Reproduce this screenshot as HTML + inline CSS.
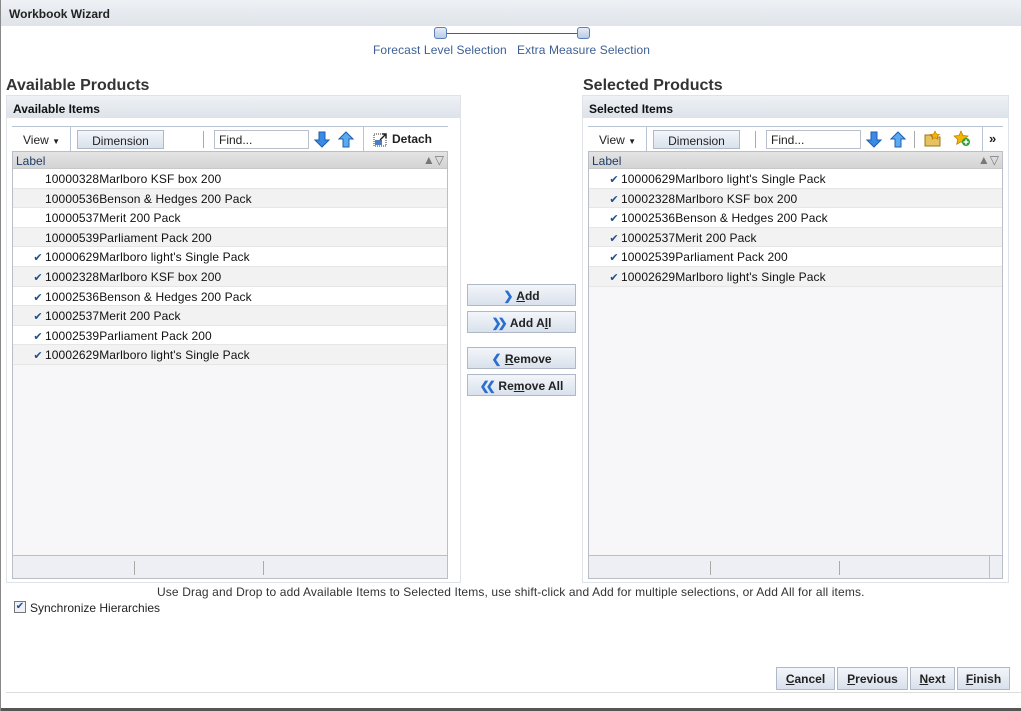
<!DOCTYPE html>
<html><head><style>
*{box-sizing:border-box;margin:0;padding:0}
body{width:1021px;height:711px;position:relative;background:#fff;font-family:"Liberation Sans",Arial,sans-serif;font-size:12px;color:#222;overflow:hidden}
.a{position:absolute}
.titlebar{left:0;top:0;width:1021px;height:26px;background:linear-gradient(#eef1f5,#dfe4ea);border-left:1px solid #999}
.sq{width:13px;height:12px;border:1px solid #5b7fb8;border-radius:3px;background:linear-gradient(#e6edf8,#b9cbe6)}
.tl{color:#3d5f94;font-size:12px;letter-spacing:0.1px}
h2{position:absolute;font-size:16px;font-weight:bold;color:#333}
.panel{border:1px solid #dfe3e8;background:#fff}
.phead{background:linear-gradient(#eef1f5,#dde3ea);height:22px;font-weight:bold;padding:6px 6px 0;font-size:12px;color:#111}
.tb{border-top:1px solid #b9c4d4}
.btn{border:1px solid #aeb8c6;background:linear-gradient(#f3f6fa,#d9e1ec);font-weight:bold;text-align:center;color:#222;font-size:12px}
.find{border:1px solid #b9c0cc;background:#fff;padding:2px 4px;font-size:12px}
.table{border:1px solid #b9bfc9;background:#f7f7fa}
.lh{height:17px;background:linear-gradient(#e4e4e4,#d4d4d4);color:#1f3c66;padding:2px 3px;font-size:12px;border-bottom:1px solid #c8c8c8}
.row{height:19.6px;line-height:20px;border-bottom:1px solid #e6e6e6;background:#fff;font-size:12px;color:#111;white-space:nowrap;letter-spacing:0.1px}
.row.g{background:#f2f2f2}
.ck{color:#1d4f8c;display:inline-block;width:14px;text-align:center;font-size:11px}
.foot{height:23px;background:#eeeff4;border-top:1px solid #b9bfc9}
.vs{position:absolute;top:5px;height:14px;border-left:1px solid #aaa}
.sep{border-left:1px solid #b9c4d4;height:24px}
.sort{float:right;font-size:12px;color:#777;line-height:12px}
u{text-decoration:underline}
</style></head><body>
<div class="a titlebar"><div class="a" style="left:8px;top:7px;font-weight:bold;font-size:12px">Workbook Wizard</div></div>
<div class="a" style="left:446px;top:33px;width:132px;border-top:1px solid #3d5f94"></div>
<div class="a sq" style="left:434px;top:27px"></div>
<div class="a sq" style="left:577px;top:27px"></div>
<div class="a tl" style="left:373px;top:43px">Forecast Level Selection</div>
<div class="a tl" style="left:517px;top:43px">Extra Measure Selection</div>

<h2 style="left:6px;top:77px">Available Products</h2>
<h2 style="left:583px;top:77px">Selected Products</h2>

<div class="a panel" style="left:6px;top:95px;width:455px;height:488px">
 <div class="phead">Available Items</div>
</div>
<div class="a tb" style="left:12px;top:126px;width:436px;height:25px"></div>
<div class="a" style="left:23px;top:133px">View <span style="font-size:8px">▼</span></div>
<div class="a sep" style="left:70px;top:127px"></div>
<div class="a btn" style="left:77px;top:130px;width:87px;height:19px;font-weight:normal;padding-top:3px">Dimension</div>
<div class="a" style="left:203px;top:131px;height:17px;border-left:1px solid #aaa"></div>
<div class="a find" style="left:214px;top:130px;width:95px;height:19px">Find...</div>
<svg class="a" style="left:314px;top:131px" width="16" height="17" viewBox="0 0 16 17"><path d="M5 1h6v8h4l-7 7-7-7h4z" fill="#3b8ae6" stroke="#1b5fb0"/></svg>
<svg class="a" style="left:338px;top:131px" width="16" height="17" viewBox="0 0 16 17"><path d="M5 16h6V8h4L8 1 1 8h4z" fill="#5aaaf0" stroke="#1b5fb0"/></svg>
<div class="a sep" style="left:363px;top:127px"></div>
<svg class="a" style="left:373px;top:132px" width="15" height="15" viewBox="0 0 15 15"><rect x="1" y="2" width="12" height="12" fill="#fff" stroke="#333" stroke-dasharray="1 1"/><rect x="2" y="8" width="7" height="5" fill="#4a7cc0"/><path d="M7 8l6-6M9 2h4v4" stroke="#222" fill="none" stroke-width="1.5"/></svg>
<div class="a" style="left:392px;top:132px;font-weight:bold">Detach</div>

<div class="a table" style="left:12px;top:151px;width:436px;height:428px">
 <div class="lh">Label<span class="sort">▲▽</span></div>
 <div class="row" style="padding-left:32px">10000328Marlboro KSF box 200</div>
 <div class="row g" style="padding-left:32px">10000536Benson &amp; Hedges 200 Pack</div>
 <div class="row" style="padding-left:32px">10000537Merit 200 Pack</div>
 <div class="row g" style="padding-left:32px">10000539Parliament Pack 200</div>
 <div class="row" style="padding-left:18px"><span class="ck">✔</span>10000629Marlboro light's Single Pack</div>
 <div class="row g" style="padding-left:18px"><span class="ck">✔</span>10002328Marlboro KSF box 200</div>
 <div class="row" style="padding-left:18px"><span class="ck">✔</span>10002536Benson &amp; Hedges 200 Pack</div>
 <div class="row g" style="padding-left:18px"><span class="ck">✔</span>10002537Merit 200 Pack</div>
 <div class="row" style="padding-left:18px"><span class="ck">✔</span>10002539Parliament Pack 200</div>
 <div class="row g" style="padding-left:18px"><span class="ck">✔</span>10002629Marlboro light's Single Pack</div>
 <div class="a foot" style="left:0;top:403px;width:434px"><div class="vs" style="left:121px"></div><div class="vs" style="left:250px"></div></div>
</div>

<div class="a panel" style="left:582px;top:95px;width:427px;height:488px">
 <div class="phead">Selected Items</div>
</div>
<div class="a tb" style="left:588px;top:126px;width:415px;height:25px"></div>
<div class="a" style="left:599px;top:133px">View <span style="font-size:8px">▼</span></div>
<div class="a sep" style="left:646px;top:127px"></div>
<div class="a btn" style="left:653px;top:130px;width:87px;height:19px;font-weight:normal;padding-top:3px">Dimension</div>
<div class="a" style="left:755px;top:131px;height:17px;border-left:1px solid #aaa"></div>
<div class="a find" style="left:766px;top:130px;width:95px;height:19px">Find...</div>
<svg class="a" style="left:866px;top:131px" width="16" height="17" viewBox="0 0 16 17"><path d="M5 1h6v8h4l-7 7-7-7h4z" fill="#3b8ae6" stroke="#1b5fb0"/></svg>
<svg class="a" style="left:890px;top:131px" width="16" height="17" viewBox="0 0 16 17"><path d="M5 16h6V8h4L8 1 1 8h4z" fill="#5aaaf0" stroke="#1b5fb0"/></svg>
<div class="a" style="left:914px;top:131px;height:17px;border-left:1px solid #aaa"></div>
<svg class="a" style="left:924px;top:130px" width="18" height="17" viewBox="0 0 18 17"><path d="M1 5h6l1 2h8v9H1z" fill="#e8c160" stroke="#9a7420"/><path d="M11 1l1.5 3 3 .3-2.3 2 .7 3-2.9-1.6-2.9 1.6.7-3-2.3-2 3-.3z" fill="#f5b400" stroke="#b57a00" stroke-width=".6"/></svg>
<svg class="a" style="left:953px;top:130px" width="18" height="17" viewBox="0 0 18 17"><path d="M8 1l2 4.5 5 .5-3.7 3.3 1 5L8 11.8 3.7 14.3l1-5L1 6l5-.5z" fill="#f5b400" stroke="#b57a00" stroke-width=".7"/><circle cx="13" cy="12" r="4" fill="#2e9e2e"/><path d="M13 9.5v5M10.5 12h5" stroke="#fff" stroke-width="1.5"/></svg>
<div class="a sep" style="left:982px;top:127px"></div>
<div class="a" style="left:989px;top:131px;font-weight:bold;font-size:13px">»</div>

<div class="a table" style="left:588px;top:151px;width:415px;height:428px">
 <div class="lh">Label<span class="sort">▲▽</span></div>
 <div class="row" style="padding-left:18px"><span class="ck">✔</span>10000629Marlboro light's Single Pack</div>
 <div class="row g" style="padding-left:18px"><span class="ck">✔</span>10002328Marlboro KSF box 200</div>
 <div class="row" style="padding-left:18px"><span class="ck">✔</span>10002536Benson &amp; Hedges 200 Pack</div>
 <div class="row g" style="padding-left:18px"><span class="ck">✔</span>10002537Merit 200 Pack</div>
 <div class="row" style="padding-left:18px"><span class="ck">✔</span>10002539Parliament Pack 200</div>
 <div class="row g" style="padding-left:18px"><span class="ck">✔</span>10002629Marlboro light's Single Pack</div>
 <div class="a foot" style="left:0;top:403px;width:413px"><div class="vs" style="left:121px"></div><div class="vs" style="left:250px"></div><div style="position:absolute;left:400px;top:0;height:22px;border-left:1px solid #b9bfc9"></div></div>
</div>

<div class="a btn" style="left:467px;top:284px;width:109px;height:22px;padding-top:4px"><span style="color:#2a6fd0">❯</span> <u>A</u>dd</div>
<div class="a btn" style="left:467px;top:311px;width:109px;height:22px;padding-top:4px"><span style="color:#2a6fd0;letter-spacing:-4px">❯❯</span>&nbsp; Add A<u>l</u>l</div>
<div class="a btn" style="left:467px;top:347px;width:109px;height:22px;padding-top:4px"><span style="color:#2a6fd0">❮</span> <u>R</u>emove</div>
<div class="a btn" style="left:467px;top:374px;width:109px;height:22px;padding-top:4px"><span style="color:#2a6fd0;letter-spacing:-4px">❮❮</span>&nbsp; Re<u>m</u>ove All</div>

<div class="a" style="left:157px;top:585px;color:#333;letter-spacing:0.13px">Use Drag and Drop to add Available Items to Selected Items, use shift-click and Add for multiple selections, or Add All for all items.</div>
<div class="a" style="left:14px;top:601px;width:12px;height:12px;border:1px solid #777;background:#eef2f8;font-size:10px;line-height:10px;text-align:center;color:#1d4f8c">✔</div>
<div class="a" style="left:30px;top:601px">Synchronize Hierarchies</div>

<div class="a btn" style="left:776px;top:667px;width:59px;height:23px;padding-top:4px"><u>C</u>ancel</div>
<div class="a btn" style="left:837px;top:667px;width:71px;height:23px;padding-top:4px"><u>P</u>revious</div>
<div class="a btn" style="left:910px;top:667px;width:45px;height:23px;padding-top:4px"><u>N</u>ext</div>
<div class="a btn" style="left:957px;top:667px;width:53px;height:23px;padding-top:4px"><u>F</u>inish</div>
<div class="a" style="left:6px;top:692px;width:1015px;border-top:1px solid #ddd"></div>
<div class="a" style="left:0;top:708px;width:1021px;height:3px;background:#555"></div>
<div class="a" style="left:0;top:0;width:1px;height:711px;background:#888"></div>
</body></html>
